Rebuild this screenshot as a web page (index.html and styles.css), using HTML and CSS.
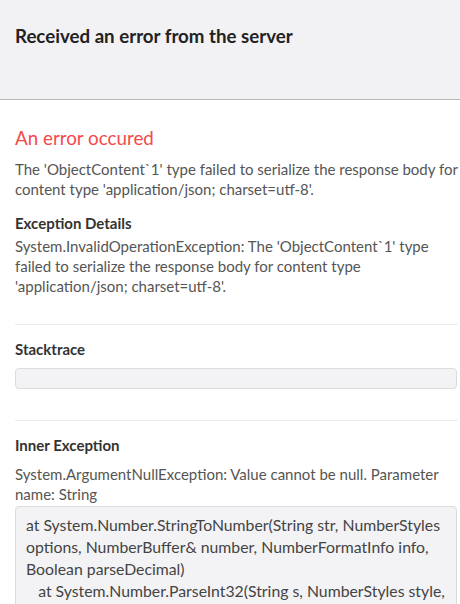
FILE: index.html
```html
<!DOCTYPE html>
<html>
<head>
<meta charset="utf-8">
<link rel="stylesheet" href="styles.css">
</head>
<body>
<header class="header">
  <h1 class="title">Received an error from the server</h1>
</header>
<main class="content">
  <h2 class="error-title">An error occured</h2>
  <p class="text msg">The 'ObjectContent`1' type failed to serialize the response body for content type 'application/json; charset=utf-8'.</p>
  <h4 class="label details">Exception Details</h4>
  <p class="text">System.InvalidOperationException: The 'ObjectContent`1' type failed to serialize the response body for content type 'application/json; charset=utf-8'.</p>
  <hr class="sep">
  <h4 class="label">Stacktrace</h4>
  <pre class="trace empty"></pre>
  <hr class="sep">
  <h4 class="label">Inner Exception</h4>
  <p class="text inner">System.ArgumentNullException: Value cannot be null. Parameter name: String</p>
  <pre class="trace">at System.Number.StringToNumber(String str, NumberStyles options, NumberBuffer&amp; number, NumberFormatInfo info, Boolean parseDecimal)
   at System.Number.ParseInt32(String s, NumberStyles style, NumberFormatInfo info)
   at System.Int32.Parse(String s)</pre>
</main>
</body>
</html>
```
FILE: styles.css
```css
html, body {
  margin: 0;
  padding: 0;
  background: #fff;
}
body {
  font-family: Lato, "Open Sans", sans-serif;
  font-size: 15px;
  line-height: 20px;
  color: #555;
  overflow: hidden;
}
.header {
  background: #f2f2f4;
  border-bottom: 1px solid #b9b9bb;
  padding: 26px 15px 0;
  height: 73px;
}
.title {
  margin: 0;
  font-size: 18.7px;
  line-height: 20px;
  font-weight: 700;
  color: #222;
}
.content {
  padding: 0 0 0 15px;
}
.error-title {
  margin: 27px 0 10px;
  font-size: 18.8px;
  line-height: 22px;
  font-weight: 400;
  color: #f44a4a;
}
.text {
  margin: 0 0 28px;
}
.text.msg {
  margin-bottom: 14px;
}
.text.inner {
  margin-bottom: 2px;
}
.label {
  margin: 0 0 9px;
  font-size: 15px;
  line-height: 20px;
  font-weight: 700;
  color: #333;
}
.label.details {
  margin-bottom: 3px;
}
.sep {
  margin: 0 2px 14px 0;
  border: 0;
  border-top: 1px solid #ececec;
}
.trace {
  margin: 0 3px 0 0;
  padding: 7px 6px 7px 10px;
  background: #f3f3f5;
  border: 1px solid #dcdcdc;
  border-radius: 4px;
  font-family: Lato, "Open Sans", sans-serif;
  font-size: 15.8px;
  line-height: 22px;
  color: #444;
  white-space: pre-wrap;
  word-break: normal;
}
.trace.empty {
  height: 19px;
  padding: 0;
  margin: 5px 3px 31px 0;
}
```
